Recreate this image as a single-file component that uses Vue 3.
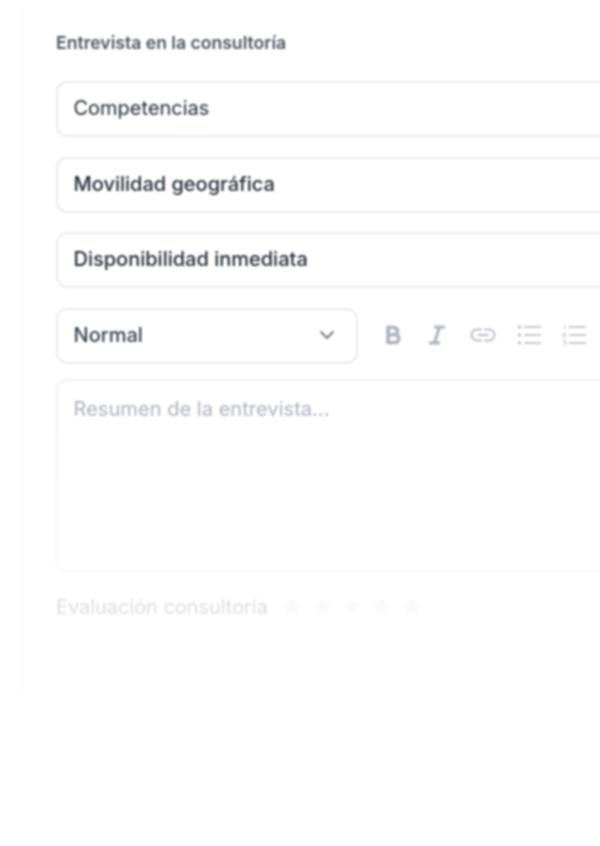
<script setup>
const fields = [
  { label: 'Competencias', strong: false },
  { label: 'Movilidad geográfica', strong: true },
  { label: 'Disponibilidad inmediata', strong: true },
]
const stars = [1, 2, 3, 4, 5]
</script>

<template>
  <div class="page">
    <div class="panel">
      <h2 class="title">Entrevista en la consultoría</h2>
      <div v-for="f in fields" :key="f.label" class="field" :class="{ strong: f.strong }">{{ f.label }}</div>
      <div class="toolbar">
        <div class="select">
          <span>Normal</span>
          <svg width="16" height="10" viewBox="0 0 16 10" fill="none" stroke="#6b7280" stroke-width="1.8" stroke-linecap="round" stroke-linejoin="round"><path d="M2 2l6 6 6-6"/></svg>
        </div>
        <div class="tools">
          <svg class="tool-b" width="18" height="20" viewBox="0 0 18 20" fill="none" stroke="#aeb3c2" stroke-width="3.6"><path d="M4 2.500h6a3.600 3.600 0 0 1 0 7.200H4zM4 9.700h7a3.900 3.900 0 0 1 0 7.800H4zM4 1v18"/></svg>
          <svg class="tool-i" width="18" height="20" viewBox="0 0 18 20" fill="none" stroke="#aeb3c2" stroke-width="3"><path d="M6 2h11M1 18h11M11.500 2L6.500 18"/></svg>
          <svg width="26" height="18" viewBox="0 0 26 18" fill="none" stroke="#b8bcc9" stroke-width="2" stroke-linecap="round"><path d="M11 3.500H7a5.500 5.500 0 0 0 0 11h4M15 3.500h4a5.500 5.500 0 0 1 0 11h-4M8.500 9h9"/></svg>
          <svg width="24" height="20" viewBox="0 0 24 20" fill="none" stroke="#c6c9d3" stroke-width="2"><path d="M7 2h17M7 10h17M7 18h17"/><g fill="#bcc0cb" stroke="none"><circle cx="2.500" cy="2" r="1.700"/><circle cx="2.500" cy="10" r="1.700"/><circle cx="2.500" cy="18" r="1.700"/></g></svg>
          <svg width="24" height="20" viewBox="0 0 24 20" fill="none" stroke="#c6c9d3" stroke-width="2"><path d="M7 2h17M7 10h17M7 18h17"/><path stroke-width="1" d="M2.500 0v4M1 8h2.500v2H1v2h3M1 16h3v4H1M1.500 18H4"/></svg>
        </div>
      </div>
      <div class="editor">Resumen de la entrevista...</div>
      <div class="rating">
        <span>Evaluación consultoría</span>
        <div class="stars">
          <svg v-for="s in stars" :key="s" width="22" height="21" viewBox="0 0 24 24" fill="#f1f2f4"><path d="M12 1.500l3.200 7 7.600.8-5.700 5.100 1.600 7.500L12 18.100l-6.700 3.800 1.600-7.500L1.200 9.300l7.600-.8z"/></svg>
        </div>
      </div>
    </div>
    <div class="fade"></div>
  </div>
</template>

<style scoped>
.page {
  position: relative;
  width: 600px;
  height: 846px;
  overflow: hidden;
  background: #fff;
  font-family: Inter, "Liberation Sans", sans-serif;
}
.panel {
  box-sizing: border-box;
  width: 700px;
  height: 740px;
  margin-left: 21px;
  padding: 22px 0 0 32px;
  position: relative;
  top: 10px;
  border-left: 3px solid #fbfbfc;
  filter: blur(0.9px);
}
.title {
  margin: 0 0 27px;
  font-size: 17.600px;
  line-height: 22px;
  font-weight: 600;
  color: #4b5563;
}
.field {
  box-sizing: border-box;
  height: 56px;
  margin-bottom: 19.600px;
  padding: 0 16px 2px 15.500px;
  display: flex;
  align-items: center;
  border: 2px solid #e9ebee;
  border-radius: 11px;
  font-size: 20px;
  color: #1f2937;
}
.field.strong {
  font-weight: 450;
}
.toolbar {
  display: flex;
  align-items: center;
  height: 56px;
  margin-bottom: 15px;
}
.select {
  box-sizing: border-box;
  width: 302px;
  height: 56px;
  padding: 0 21px 1px 15.500px;
  display: flex;
  align-items: center;
  justify-content: space-between;
  border: 2px solid #e9ebee;
  border-radius: 11px;
  font-size: 20px;
  font-weight: 450;
  color: #374151;
}
.tools {
  display: flex;
  align-items: center;
  gap: 21px;
  margin-left: 26px;
  padding-bottom: 1px;
}
.tool-b {
  margin-right: 5px;
}
.tool-i {
  margin-right: 3px;
}
.editor {
  box-sizing: border-box;
  height: 193px;
  padding: 15px 15.500px;
  border: 2px solid #eef0f2;
  border-radius: 11px;
  font-size: 20.100px;
  line-height: 26px;
  color: #a3a8b4;
}
.rating {
  display: flex;
  align-items: center;
  gap: 13px;
  height: 30px;
  margin-top: 20px;
  font-size: 19.900px;
  color: #aeb1b9;
}
.stars {
  display: flex;
  gap: 8px;
}
.fade {
  position: absolute;
  left: 0;
  right: 0;
  top: 360px;
  bottom: 0;
  background: linear-gradient(to bottom, rgba(255,255,255,0), rgba(255,255,255,0.55) 50%, #fff 80%);
  pointer-events: none;
}
</style>
